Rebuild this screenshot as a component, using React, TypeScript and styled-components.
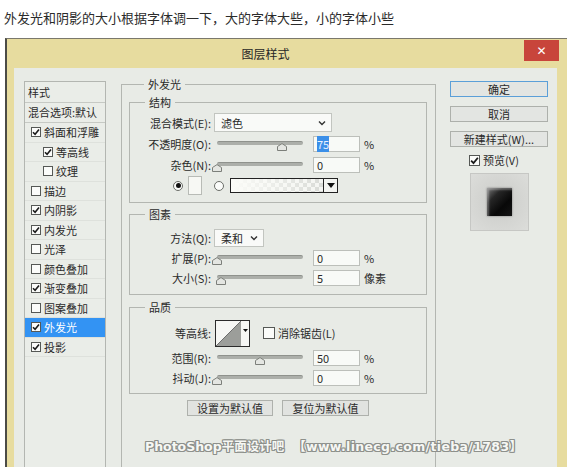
import React from "react";
import styled, { createGlobalStyle } from "styled-components";

const GlobalStyle = createGlobalStyle`
  html, body { margin: 0; padding: 0; background: #ffffff; }
  body { font-family: "Noto Sans CJK SC", "Noto Sans", sans-serif; color: #2a2a2a; }
  * { box-sizing: border-box; }
`;

const Page = styled.div`
  width: 567px;
  height: 467px;
  overflow: hidden;
  display: flex;
  flex-direction: column;
`;

const Caption = styled.div`
  flex: none;
  height: 38px;
  padding-left: 4px;
  font-size: 13px;
  line-height: 36px;
  color: #2b2b2b;
  white-space: nowrap;
`;

const Dialog = styled.div`
  flex: none;
  height: 445px;
  margin-left: 5px;
  display: flex;
  flex-direction: column;
  border-left: 2px solid #4b4b46;
  border-top: 1px solid #7a786c;
  background: #e7dc9f;
`;

const TitleBar = styled.div`
  flex: none;
  height: 29px;
  display: grid;
  grid-template-columns: 1fr auto;
  align-items: start;
  padding-right: 8px;
`;

const Title = styled.div`
  font-size: 12px;
  line-height: 29px;
  text-align: center;
  color: #262626;
`;

const CloseButton = styled.div`
  width: 35px;
  height: 21px;
  margin-top: 1px;
  background: #c8453b;
  color: #ffffff;
  display: flex;
  align-items: center;
  justify-content: center;
  font-family: "DejaVu Sans", sans-serif;
  font-size: 12px;
  font-weight: bold;
`;

const Body = styled.div`
  flex: 1;
  display: flex;
  padding: 0 10px 0 7px;
  min-height: 0;
`;

const Panel = styled.div`
  flex: 1;
  position: relative;
  display: flex;
  align-items: stretch;
  padding: 13px 9px 0 10px;
  background: #e8ebe6;
`;

/* ---------- left style list ---------- */

const StyleList = styled.div`
  flex: none;
  width: 82px;
  display: flex;
  flex-direction: column;
  border: 1px solid #b3b6b1;
  background: #eaede8;
`;

const ListHeader = styled.div<{ $h: number }>`
  flex: none;
  height: ${(p) => p.$h}px;
  padding-left: 3px;
  font-size: 11px;
  line-height: ${(p) => p.$h - 1}px;
  border-bottom: 1px solid #c6c9c4;
  white-space: nowrap;
`;

const ListItem = styled.div<{ $indent?: boolean; $selected?: boolean }>`
  flex: none;
  height: 19.5px;
  display: flex;
  align-items: center;
  gap: 3px;
  padding-left: ${(p) => (p.$indent ? 18 : 6)}px;
  font-size: 11px;
  white-space: nowrap;
  border-bottom: 1px solid #dee1dc;
  background: ${(p) => (p.$selected ? "#3393f3" : "transparent")};
  color: ${(p) => (p.$selected ? "#ffffff" : "#2a2a2a")};
`;

const Box = styled.span<{ $size: number }>`
  flex: none;
  width: ${(p) => p.$size}px;
  height: ${(p) => p.$size}px;
  border: 1px solid #555855;
  background: #fbfcfa;
  display: inline-flex;
  align-items: center;
  justify-content: center;
`;

const Check = ({ checked, size = 10 }: { checked: boolean; size?: number }) => (
  <Box $size={size}>
    {checked && (
      <svg width={size - 2} height={size - 2} viewBox="0 0 8 8">
        <path d="M1 4.2 L3.1 6.3 L7 1.6" fill="none" stroke="#1b1b1b" strokeWidth="1.6" />
      </svg>
    )}
  </Box>
);

/* ---------- fieldsets ---------- */

const OuterGroup = styled.fieldset`
  flex: none;
  width: 315px;
  margin: -4px 0 0 15px;
  padding: 4px 8px 0 7px;
  border: 1px solid #b3b6b1;
  min-width: 0;
`;

const Group = styled.fieldset<{ $pt: number; $pb: number; $mt: number }>`
  margin: ${(p) => p.$mt}px 0 0 0;
  padding: ${(p) => p.$pt}px 0 ${(p) => p.$pb}px 0;
  border: 1px solid #b3b6b1;
  min-width: 0;
`;

const Legend = styled.legend`
  margin-left: 15px;
  padding: 0 4px;
  font-size: 11px;
  line-height: 14px;
  height: 14px;
  color: #2a2a2a;
`;

const Row = styled.div<{ $h: number; $pl?: number }>`
  height: ${(p) => p.$h}px;
  display: flex;
  align-items: center;
  padding-left: ${(p) => p.$pl ?? 0}px;
`;

const Label = styled.div`
  flex: none;
  width: 82px;
  padding-right: 1px;
  text-align: right;
  font-size: 11px;
  white-space: nowrap;
`;

const Select = styled.div<{ $w: number; $h: number }>`
  flex: none;
  width: ${(p) => p.$w}px;
  height: ${(p) => p.$h}px;
  margin-left: 2px;
  padding: 0 5px 0 6px;
  display: flex;
  align-items: center;
  justify-content: space-between;
  border: 1px solid #c2c5c0;
  background: #f9faf8;
  font-size: 11px;
`;

const Chevron = () => (
  <svg width="8" height="6" viewBox="0 0 8 6">
    <path d="M1 1.5 L4 4.5 L7 1.5" fill="none" stroke="#333" strokeWidth="1.4" />
  </svg>
);

const SliderWrap = styled.div`
  flex: none;
  position: relative;
  width: 92px;
  height: 14px;
  margin-left: 2px;
`;

const Track = styled.div`
  margin: 4px 3px 0 3px;
  height: 4px;
  border-radius: 2px;
  background: #acafaa;
  border-top: 1px solid #8f928d;
`;

const Thumb = styled.svg`
  position: absolute;
  top: 6px;
`;

const Slider = ({ value }: { value: number }) => (
  <SliderWrap>
    <Track />
    <Thumb width="10" height="8" viewBox="0 0 10 8" style={{ left: 3 + (value / 100) * 86 - 5 }}>
      <path d="M0.5 3.5 L5 0.6 L9.5 3.5 L9.5 7.5 L0.5 7.5 Z" fill="#e4e6e2" stroke="#7c7f7a" />
    </Thumb>
  </SliderWrap>
);

const NumberBox = styled.div`
  flex: none;
  width: 47px;
  height: 16px;
  margin-left: 7px;
  padding-left: 3px;
  border: 1px solid #bcbfba;
  background: #f8faf7;
  font-size: 11px;
  line-height: 14px;
`;

const Selected = styled.span`
  background: #3b8fe8;
  color: #e8f0ff;
`;

const Unit = styled.span`
  margin-left: 4px;
  font-size: 11px;
`;

const Radio = styled.span<{ $on?: boolean; $ml: number }>`
  flex: none;
  width: 10px;
  height: 10px;
  margin-left: ${(p) => p.$ml}px;
  border-radius: 50%;
  border: 1px solid #6a6d68;
  background: #fbfcfa;
  display: inline-flex;
  align-items: center;
  justify-content: center;
  &::after {
    content: "";
    width: 5px;
    height: 5px;
    border-radius: 50%;
    background: ${(p) => (p.$on ? "#111" : "transparent")};
  }
`;

const Swatch = styled.span`
  flex: none;
  width: 14px;
  height: 19px;
  margin-left: 5px;
  border: 1px solid #b8bbb6;
  background: #f7f8f4;
`;

const GradientPicker = styled.div`
  flex: none;
  width: 108px;
  height: 15px;
  margin-left: 6px;
  display: flex;
  border: 1px solid #222;
`;

const GradientBar = styled.div`
  flex: 1;
  background:
    linear-gradient(90deg, #fbfcf8 0%, rgba(251, 252, 248, 0.6) 40%, rgba(251, 252, 248, 0) 100%),
    repeating-conic-gradient(#d9dbd7 0% 25%, #f4f5f2 0% 50%) 0 0 / 8px 8px;
`;

const DropArrow = styled.div`
  flex: none;
  width: 14px;
  border-left: 1px solid #222;
  background: #f3f4f1;
  display: flex;
  align-items: center;
  justify-content: center;
`;

const ContourBox = styled.div`
  flex: none;
  width: 35px;
  height: 27px;
  margin-left: 3px;
  display: flex;
  border: 1px solid #2b2b2b;
  background: #f6f7f4;
`;

const ContourStrip = styled.div`
  flex: none;
  width: 8px;
  display: flex;
  align-items: center;
  justify-content: center;
  padding-bottom: 6px;
`;

const CheckLabel = styled.div<{ $ml: number }>`
  display: flex;
  align-items: center;
  gap: 3px;
  margin-left: ${(p) => p.$ml}px;
  font-size: 11px;
  white-space: nowrap;
`;

const ButtonRow = styled.div`
  display: flex;
  justify-content: center;
  gap: 9px;
  margin-top: 6px;
`;

const PushButton = styled.div<{ $w: number }>`
  width: ${(p) => p.$w}px;
  height: 16px;
  border: 1px solid #aeb1ac;
  background: #e1e3e0;
  font-size: 11px;
  line-height: 14px;
  text-align: center;
  white-space: nowrap;
`;

/* ---------- right column ---------- */

const SideColumn = styled.div`
  flex: none;
  width: 98px;
  margin-left: 14px;
  display: flex;
  flex-direction: column;
  gap: 9px;
`;

const SideButton = styled.div<{ $primary?: boolean }>`
  height: 16px;
  border: 1px solid ${(p) => (p.$primary ? "#5b9fd8" : "#adb0ab")};
  background: #e3e5e2;
  font-size: 11px;
  line-height: 14px;
  text-align: center;
  white-space: nowrap;
`;

const PreviewCheck = styled.div`
  margin-top: -4px;
  height: 16px;
  display: flex;
  align-items: center;
  justify-content: center;
  gap: 3px;
  font-size: 11px;
  padding-right: 10px;
`;

const PreviewBox = styled.div`
  align-self: center;
  margin-top: -4px;
  width: 59px;
  height: 58px;
  border: 1px solid #c6c7c4;
  background: radial-gradient(circle at 50% 50%, #c9cac7 0%, #d4d5d2 55%, #dcddda 100%);
  display: flex;
  align-items: center;
  justify-content: center;
`;

const PreviewSwatch = styled.div`
  width: 25px;
  height: 28px;
  background: linear-gradient(135deg, #7a7a7a 0%, #262626 30%, #080808 65%, #151515 100%);
  box-shadow: inset 2px 2px 2px rgba(255, 255, 255, 0.3), 0 0 2px rgba(0, 0, 0, 0.4);
`;

const Watermark = styled.div`
  position: absolute;
  left: 131px;
  top: 372px;
  display: flex;
  gap: 9px;
  font-family: "DejaVu Sans", "Noto Sans CJK SC", sans-serif;
  font-size: 12.5px;
  font-weight: bold;
  line-height: 14px;
  color: #f6f7f4;
  white-space: nowrap;
  text-shadow:
    1px 0 0 #8d908b, -1px 0 0 #8d908b, 0 1px 0 #8d908b, 0 -1px 0 #8d908b,
    1px 1px 0 #8d908b, -1px -1px 0 #8d908b, 1px -1px 0 #8d908b, -1px 1px 0 #8d908b;
`;

const WatermarkPart = styled.span<{ $spacing: number }>`
  letter-spacing: ${(p) => p.$spacing}px;
`;

const styleItems: { name: string; checked: boolean; indent?: boolean; selected?: boolean }[] = [
  { name: "斜面和浮雕", checked: true },
  { name: "等高线", checked: true, indent: true },
  { name: "纹理", checked: false, indent: true },
  { name: "描边", checked: false },
  { name: "内阴影", checked: true },
  { name: "内发光", checked: true },
  { name: "光泽", checked: false },
  { name: "颜色叠加", checked: false },
  { name: "渐变叠加", checked: true },
  { name: "图案叠加", checked: false },
  { name: "外发光", checked: true, selected: true },
  { name: "投影", checked: true },
];

export default function App() {
  return (
    <Page>
      <GlobalStyle />
      <Caption>外发光和阴影的大小根据字体调一下，大的字体大些，小的字体小些</Caption>
      <Dialog>
        <TitleBar>
          <Title>图层样式</Title>
          <CloseButton>✕</CloseButton>
        </TitleBar>
        <Body>
          <Panel>
            <StyleList>
              <ListHeader $h={21}>样式</ListHeader>
              <ListHeader $h={20}>混合选项:默认</ListHeader>
              {styleItems.map((it) => (
                <ListItem key={it.name} $indent={it.indent} $selected={it.selected}>
                  <Check checked={it.checked} />
                  {it.name}
                </ListItem>
              ))}
            </StyleList>

            <OuterGroup>
              <Legend>外发光</Legend>

              <Group $pt={3} $pb={6} $mt={0}>
                <Legend>结构</Legend>
                <Row $h={21}>
                  <Label>混合模式(E):</Label>
                  <Select $w={118} $h={19}>
                    滤色
                    <Chevron />
                  </Select>
                </Row>
                <Row $h={21}>
                  <Label>不透明度(O):</Label>
                  <Slider value={75} />
                  <NumberBox>
                    <Selected>75</Selected>
                  </NumberBox>
                  <Unit>%</Unit>
                </Row>
                <Row $h={21}>
                  <Label>杂色(N):</Label>
                  <Slider value={0} />
                  <NumberBox>0</NumberBox>
                  <Unit>%</Unit>
                </Row>
                <Row $h={21} $pl={43}>
                  <Radio $on $ml={0} />
                  <Swatch />
                  <Radio $ml={12} />
                  <GradientPicker>
                    <GradientBar />
                    <DropArrow>
                      <svg width="8" height="5" viewBox="0 0 8 5">
                        <path d="M0 0 L8 0 L4 5 Z" fill="#111" />
                      </svg>
                    </DropArrow>
                  </GradientPicker>
                </Row>
              </Group>

              <Group $pt={7} $pb={6} $mt={4}>
                <Legend>图素</Legend>
                <Row $h={20}>
                  <Label>方法(Q):</Label>
                  <Select $w={50} $h={18}>
                    柔和
                    <Chevron />
                  </Select>
                </Row>
                <Row $h={20}>
                  <Label>扩展(P):</Label>
                  <Slider value={0} />
                  <NumberBox>0</NumberBox>
                  <Unit>%</Unit>
                </Row>
                <Row $h={20}>
                  <Label>大小(S):</Label>
                  <Slider value={5} />
                  <NumberBox>5</NumberBox>
                  <Unit>像素</Unit>
                </Row>
              </Group>

              <Group $pt={4} $pb={5} $mt={5}>
                <Legend>品质</Legend>
                <Row $h={30}>
                  <Label>等高线:</Label>
                  <ContourBox>
                    <svg width="25" height="25" viewBox="0 0 25 25">
                      <path d="M0 25 L25 0 L25 25 Z" fill="#9c9e9a" />
                      <path d="M0 25 L25 0" stroke="#555" strokeWidth="0.8" />
                    </svg>
                    <ContourStrip>
                      <svg width="5" height="3" viewBox="0 0 5 3">
                        <path d="M0 0 L5 0 L2.5 3 Z" fill="#111" />
                      </svg>
                    </ContourStrip>
                  </ContourBox>
                  <CheckLabel $ml={13}>
                    <Check checked={false} size={12} />
                    消除锯齿(L)
                  </CheckLabel>
                </Row>
                <Row $h={20}>
                  <Label>范围(R):</Label>
                  <Slider value={50} />
                  <NumberBox>50</NumberBox>
                  <Unit>%</Unit>
                </Row>
                <Row $h={20}>
                  <Label>抖动(J):</Label>
                  <Slider value={0} />
                  <NumberBox>0</NumberBox>
                  <Unit>%</Unit>
                </Row>
              </Group>

              <ButtonRow>
                <PushButton $w={86}>设置为默认值</PushButton>
                <PushButton $w={87}>复位为默认值</PushButton>
              </ButtonRow>
            </OuterGroup>

            <SideColumn>
              <SideButton $primary>确定</SideButton>
              <SideButton>取消</SideButton>
              <SideButton>新建样式(W)...</SideButton>
              <PreviewCheck>
                <Check checked size={11} />
                预览(V)
              </PreviewCheck>
              <PreviewBox>
                <PreviewSwatch />
              </PreviewBox>
            </SideColumn>

            <Watermark>
              <WatermarkPart $spacing={0}>PhotoShop平面设计吧</WatermarkPart>
              <WatermarkPart $spacing={0.35}>【www.linecg.com/tieba/1783】</WatermarkPart>
            </Watermark>
          </Panel>
        </Body>
      </Dialog>
    </Page>
  );
}
